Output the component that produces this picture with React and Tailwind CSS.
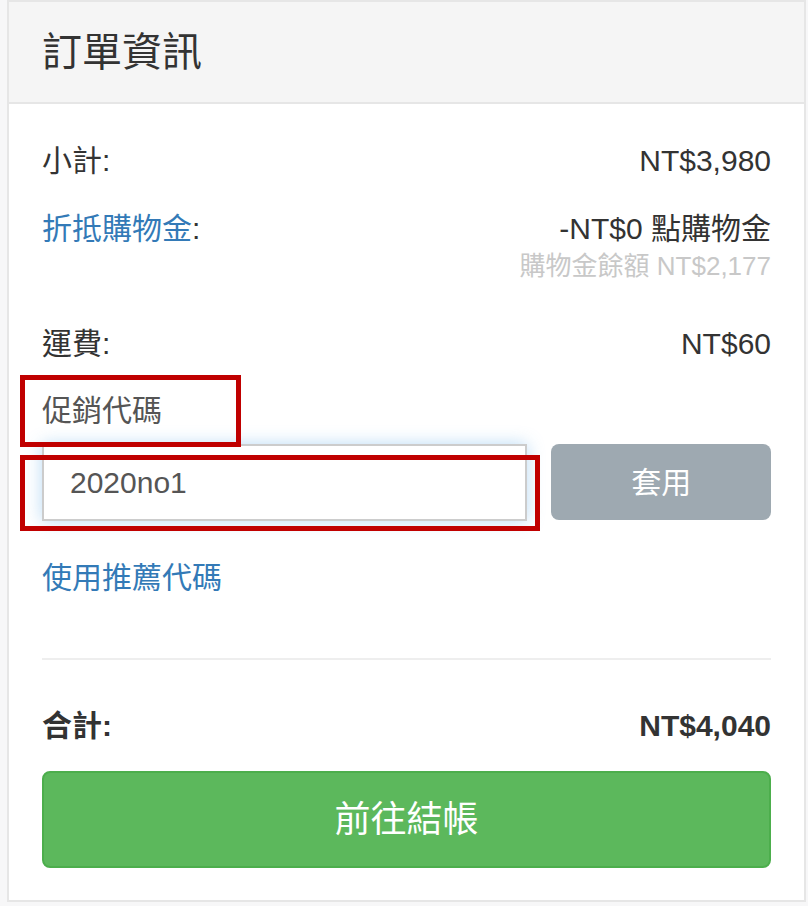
import React from "react";

const font = { fontFamily: '"Liberation Sans", "Noto Sans CJK TC", sans-serif' };

const Row = ({ label, value, className = "" }) => (
  <div className={`flex justify-between items-center h-[42px] leading-[42px] ${className}`}>
    <span>{label}</span>
    <span>{value}</span>
  </div>
);

const App = () => {
  return (
    <div
      className="relative w-[808px] h-[906px] bg-[#f7f7f8] pl-[7px] pr-[2px] text-[30px] text-[#333]"
      style={font}
    >
      <div className="border-2 border-[#e6e6e6] bg-white h-[902px]">
        <div className="h-[102px] bg-[#f5f5f5] border-b-2 border-[#e6e6e6] flex items-center px-[33px]">
          <h3 className="text-[40px] leading-none text-[#333]">訂單資訊</h3>
        </div>

        <div className="px-[33px] pt-[36px] flex flex-col">
          <Row label="小計:" value="NT$3,980" />

          <div className="mt-[26px] flex justify-between items-center h-[42px] leading-[42px]">
            <span>
              <a className="text-[#337ab7]">折抵購物金</a>:
            </span>
            <span>-NT$0 點購物金</span>
          </div>
          <div className="h-[32px] leading-[32px] text-right text-[26px] text-[#c8c8c8]">
            購物金餘額 NT$2,177
          </div>

          <Row className="mt-[41px]" label="運費:" value="NT$60" />

          <div className="mt-[25px] h-[42px] leading-[42px] text-[#555]">促銷代碼</div>

          <div className="mt-[12px] flex gap-[24px]">
            <input
              readOnly
              value="2020no1"
              className="w-[486px] h-[77px] border-2 border-[#cccccc] bg-white pl-[26px] text-[30px] text-[#555] outline-none shadow-[0_0_16px_rgba(102,175,233,0.45)]"
              style={font}
            />
            <button className="w-[220px] h-[76px] rounded-[8px] bg-[#9ea9b1] text-white text-[30px]">
              套用
            </button>
          </div>

          <a className="mt-[36px] h-[42px] leading-[42px] text-[#337ab7]">使用推薦代碼</a>

          <hr className="mt-[59px] border-0 h-[2px] bg-[#eeeeee]" />

          <Row className="mt-[45px] font-bold" label="合計:" value="NT$4,040" />

          <button className="mt-[24px] h-[97px] w-full rounded-[8px] bg-[#5cb85c] border-2 border-[#4cae4c] text-white text-[36px]">
            前往結帳
          </button>
        </div>
      </div>

      <div className="absolute left-[20px] top-[375px] w-[221px] h-[72px] border-[5px] border-[#c00000] pointer-events-none" />
      <div className="absolute left-[20px] top-[455px] w-[520px] h-[76px] border-[5px] border-[#c00000] pointer-events-none" />
    </div>
  );
};

export default App;
